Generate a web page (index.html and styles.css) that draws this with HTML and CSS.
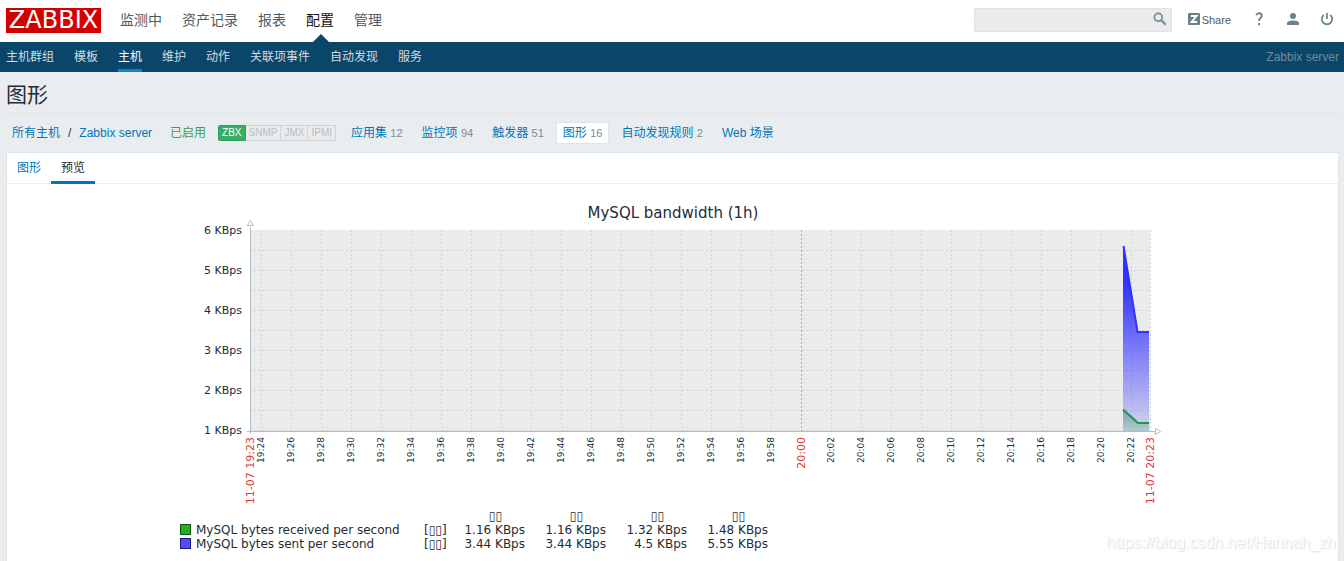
FILE: index.html
```html
<!DOCTYPE html>
<html lang="zh-CN">
<head>
<meta charset="utf-8">
<title>图形</title>
<link rel="stylesheet" href="styles.css">
</head>
<body>
<header class="top">
  <a class="logo" href="#">ZABBIX</a>
  <nav class="main-nav">
    <a href="#">监测中</a>
    <a href="#">资产记录</a>
    <a href="#">报表</a>
    <a href="#" class="selected">配置</a>
    <a href="#">管理</a>
  </nav>
  <form class="search">
    <input type="text" aria-label="搜索">
    <button type="button" aria-label="搜索">
      <svg width="14" height="14" viewBox="0 0 14 14" fill="none" stroke="#768d99"><circle cx="5.3" cy="5.3" r="3.9" stroke-width="1.7"/><path d="M8.2 8.2L12.7 12.7" stroke-width="2.2"/></svg>
    </button>
  </form>
  <div class="user-nav">
    <a class="share" href="#"><svg width="12" height="12" viewBox="0 0 12 12"><rect width="12" height="12" rx="1" fill="#69808d"/><path d="M3 3H8.6L3.6 9H9.2" fill="none" stroke="#fff" stroke-width="1.9"/></svg>Share</a>
    <a class="icon" href="#" aria-label="帮助"><svg width="14" height="14" viewBox="0 0 14 14" fill="none" stroke="#69808d" stroke-width="1.9"><path d="M4.3 3.2C4.800 1.500 6 1.300 7 1.300C8.700 1.300 9.700 2.300 9.700 3.700C9.700 5.900 7 5.900 7 9"/><path d="M7 11V13.200"/></svg></a>
    <a class="icon" href="#" aria-label="用户"><svg width="14" height="14" viewBox="0 0 14 14" fill="#69808d"><circle cx="7" cy="4" r="3"/><path d="M1 13V11C1 9.500 4 8.500 7 8.500S13 9.500 13 11V13Z"/></svg></a>
    <a class="icon" href="#" aria-label="退出"><svg width="14" height="14" viewBox="0 0 14 14" fill="none" stroke="#69808d" stroke-width="1.700"><path d="M7 1V7"/><path d="M3.800 3A5.200 5.200 0 1 0 10.200 3"/></svg></a>
  </div>
</header>
<nav class="sub-nav">
  <a href="#">主机群组</a>
  <a href="#">模板</a>
  <a href="#" class="selected">主机</a>
  <a href="#">维护</a>
  <a href="#">动作</a>
  <a href="#">关联项事件</a>
  <a href="#">自动发现</a>
  <a href="#">服务</a>
  <span class="server">Zabbix server</span>
</nav>
<main>
  <h1>图形</h1>
  <div class="object">
    <div class="crumbs"><a href="#">所有主机</a><span>/</span><a href="#">Zabbix server</a></div>
    <span class="enabled">已启用</span>
    <div class="status"><span class="on">ZBX</span><span>SNMP</span><span>JMX</span><span>IPMI</span></div>
    <div class="links">
      <span><a href="#">应用集</a> <small>12</small></span>
      <span><a href="#">监控项</a> <small>94</small></span>
      <span><a href="#">触发器</a> <small>51</small></span>
      <span class="current"><a href="#">图形</a> <small>16</small></span>
      <span><a href="#">自动发现规则</a> <small>2</small></span>
      <span><a href="#">Web 场景</a></span>
    </div>
  </div>
  <section class="panel">
    <div class="tabs"><a href="#">图形</a><a href="#" class="active">预览</a></div>
    <div class="graph">
      <svg class="plot" viewBox="0 0 1001 319" role="img" aria-label="MySQL bandwidth (1h)">
        <defs>
          <pattern id="vgrid" x="89" y="40" width="30" height="4" patternUnits="userSpaceOnUse"><rect width="1" height="2" fill="#ccd5d9"/></pattern>
          <pattern id="hgrid" x="78" y="60" width="4" height="20" patternUnits="userSpaceOnUse"><rect width="2" height="1" fill="#ccd5d9"/></pattern>
          <linearGradient id="sent" gradientUnits="userSpaceOnUse" x1="0" y1="56" x2="0" y2="241"><stop offset="0" stop-color="#3333ff"/><stop offset=".2" stop-color="#3333ff"/><stop offset="1" stop-color="#3333ff" stop-opacity=".12"/></linearGradient>
          <linearGradient id="received" x1="0" y1="0" x2="0" y2="1"><stop offset="0" stop-color="#6f9ca8" stop-opacity=".8"/><stop offset="1" stop-color="#afc9cc" stop-opacity=".9"/></linearGradient>
        </defs>
        <text class="title" x="501" y="28">MySQL bandwidth (1h)</text>
        <rect x="78" y="40" width="900" height="201" fill="#ebebeb"/>
        <rect x="79" y="40" width="899" height="201" fill="url(#vgrid)"/>
        <rect x="79" y="41" width="899" height="200" fill="url(#hgrid)"/>
        <path d="M629.500 40V241" stroke="#aaa" stroke-dasharray="2 2"/>
        <path d="M978.500 40V241" stroke="#ccd5d9" stroke-dasharray="2 2"/>
        <path d="M951 56H952L966 141H977V241H951Z" fill="url(#sent)"/>
        <path d="M951.500 56L965.500 142H977" fill="none" stroke="#3333ff" stroke-width="2"/>
        <path d="M951 219L966 233H977V241H951Z" fill="url(#received)"/>
        <path d="M951 219.500L966 233H977" fill="none" stroke="#179a43" stroke-width="2"/>
        <g fill="#fff" stroke="#afbec5"><path d="M78.500 37V244M75 241.500H983" fill="none"/><path d="M78.500 30.500L81.500 35.500H75.500Z"/><path d="M983.500 238.500V244.500L988.500 241.500Z"/></g>
        <g class="y-labels"><text x="70" y="44">6 KBps</text><text x="70" y="84">5 KBps</text><text x="70" y="124">4 KBps</text><text x="70" y="164">3 KBps</text><text x="70" y="204">2 KBps</text><text x="70" y="244">1 KBps</text></g>
        <g class="x-labels">
          <text transform="translate(92 247) rotate(-90)">19:24</text>
          <text transform="translate(122 247) rotate(-90)">19:26</text>
          <text transform="translate(152 247) rotate(-90)">19:28</text>
          <text transform="translate(182 247) rotate(-90)">19:30</text>
          <text transform="translate(212 247) rotate(-90)">19:32</text>
          <text transform="translate(242 247) rotate(-90)">19:34</text>
          <text transform="translate(272 247) rotate(-90)">19:36</text>
          <text transform="translate(302 247) rotate(-90)">19:38</text>
          <text transform="translate(332 247) rotate(-90)">19:40</text>
          <text transform="translate(362 247) rotate(-90)">19:42</text>
          <text transform="translate(392 247) rotate(-90)">19:44</text>
          <text transform="translate(422 247) rotate(-90)">19:46</text>
          <text transform="translate(452 247) rotate(-90)">19:48</text>
          <text transform="translate(482 247) rotate(-90)">19:50</text>
          <text transform="translate(512 247) rotate(-90)">19:52</text>
          <text transform="translate(542 247) rotate(-90)">19:54</text>
          <text transform="translate(572 247) rotate(-90)">19:56</text>
          <text transform="translate(602 247) rotate(-90)">19:58</text>
          <text transform="translate(662 247) rotate(-90)">20:02</text>
          <text transform="translate(692 247) rotate(-90)">20:04</text>
          <text transform="translate(722 247) rotate(-90)">20:06</text>
          <text transform="translate(752 247) rotate(-90)">20:08</text>
          <text transform="translate(782 247) rotate(-90)">20:10</text>
          <text transform="translate(812 247) rotate(-90)">20:12</text>
          <text transform="translate(842 247) rotate(-90)">20:14</text>
          <text transform="translate(872 247) rotate(-90)">20:16</text>
          <text transform="translate(902 247) rotate(-90)">20:18</text>
          <text transform="translate(932 247) rotate(-90)">20:20</text>
          <text transform="translate(962 247) rotate(-90)">20:22</text>
          <text class="major" transform="translate(82 247) rotate(-90)">11-07 19:23</text>
          <text class="major" transform="translate(633 247) rotate(-90)">20:00</text>
          <text class="major" transform="translate(982 247) rotate(-90)">11-07 20:23</text>
        </g>
      </svg>
      <table class="legend">
        <thead><tr><th class="name"></th><th class="func"></th><th class="value">▯▯</th><th class="value">▯▯</th><th class="value">▯▯</th><th class="value">▯▯</th></tr></thead>
        <tbody>
          <tr><td class="name"><i class="swatch green"></i>MySQL bytes received per second</td><td class="func">[▯▯]</td><td>1.16 KBps</td><td>1.16 KBps</td><td>1.32 KBps</td><td>1.48 KBps</td></tr>
          <tr><td class="name"><i class="swatch blue"></i>MySQL bytes sent per second</td><td class="func">[▯▯]</td><td>3.44 KBps</td><td>3.44 KBps</td><td>4.5 KBps</td><td>5.55 KBps</td></tr>
        </tbody>
      </table>
    </div>
  </section>
</main>
<div class="watermark">https://blog.csdn.net/Hannah_zh</div>
</body>
</html>
```
FILE: styles.css
```css
* { box-sizing: border-box; }
body {
  margin: 0;
  min-height: 100vh;
  display: flex;
  flex-direction: column;
  position: relative;
  overflow: hidden;
  background: #e9edf0;
  color: #1f2c33;
  font: 12px/16px "Liberation Sans", "Noto Sans CJK SC", sans-serif;
}
a { color: #0275b8; text-decoration: none; }

.top { display: flex; align-items: center; height: 42px; padding: 0 10px 2px 6px; background: #fff; }
.logo {
  width: 95px;
  height: 25px;
  background: #d40000;
  color: #fff;
  font: 24px/25px "DejaVu Sans", sans-serif;
  text-align: center;
}
.main-nav { display: flex; gap: 20px; margin-left: 19px; font-size: 14px; line-height: 40px; }
.main-nav a { color: #4f5b62; }
.main-nav .selected { position: relative; color: #0a1216; }
.main-nav .selected::after {
  content: "";
  position: absolute;
  left: 7px;
  bottom: -2px;
  border: 8px solid transparent;
  border-top: 0;
  border-bottom-color: #0a466a;
}
.search { position: relative; margin-left: auto; }
.search input { display: block; width: 198px; height: 24px; padding: 0 26px 0 6px; border: 1px solid #dfe4e7; background: #ebebeb; }
.search button { position: absolute; right: 5px; top: 4px; display: flex; padding: 0; border: 0; background: none; }
.user-nav { display: flex; align-items: center; gap: 20px; margin-left: 16px; }
.share { display: flex; align-items: center; gap: 2px; margin-right: 1px; color: #4f5b62; font-size: 11px; }
.share svg { margin-bottom: 2px; }
.icon { display: flex; width: 14px; margin-bottom: 2px; }

.sub-nav { display: flex; gap: 20px; height: 30px; padding: 0 5px 0 6px; background: #0a466a; line-height: 30px; }
.sub-nav a { color: #d0dce3; }
.sub-nav .selected { color: #fff; border-bottom: 3px solid #1383c6; }
.server { margin-left: auto; color: #6e8c9c; }

main { flex: 1; display: flex; flex-direction: column; padding: 0 5px 0 6px; }
h1 { margin: 0; height: 42px; border-bottom: 1px solid #dfe4e7; font-size: 21px; font-weight: 400; line-height: 46px; }
.object { display: flex; align-items: center; height: 38px; padding-left: 6px; }
.crumbs { display: flex; gap: 8px; }
.enabled { margin-left: 18px; color: #429e47; }
.status { display: flex; margin: 0 8px 0 12px; font-size: 10px; line-height: 14px; }
.status span { padding: 0 3px; border: 1px solid #ccd5d9; border-left-width: 0; background: #ebebeb; color: #b4bfc5; }
.status .on { border-color: #2f9f5e; background: #34af67; color: #fff; border-left-width: 1px; border-radius: 2px 0 0 2px; }
.links { display: flex; gap: 5px; }
.links > span { padding: 2px 6px; border: 1px solid transparent; border-radius: 2px; }
.links .current { background: #fff; border-color: #dfe4e7; }
.links small { color: #768d99; font-size: 11px; }

.panel { flex: 1; border: 1px solid #dfe4e7; border-bottom: 0; background: #fff; }
.tabs { display: flex; height: 31px; border-bottom: 1px solid #ebeef0; line-height: 30px; }
.tabs a { height: 31px; padding: 0 10px; }
.tabs .active { color: #1f2c33; border-bottom: 3px solid #0275b8; }

.graph { width: 1001px; max-width: 100%; margin: 6px auto 0; font-family: "DejaVu Sans", sans-serif; }
.plot { display: block; width: 100%; font-family: "DejaVu Sans", sans-serif; fill: #1f2c33; }
.title { font-size: 15px; text-anchor: middle; }
.y-labels { font-size: 11px; text-anchor: end; }
.x-labels { font-size: 9px; text-anchor: end; }
.major { font-size: 11px; fill: #e33734; }

.legend { margin-left: 8px; border-collapse: collapse; table-layout: fixed; width: 588px; font-size: 12px; line-height: 14px; }
.legend th, .legend td { height: 14px; padding: 0; text-align: right; font-weight: 400; white-space: nowrap; }
.legend .value { width: 81px; padding-right: 23px; }
.legend .name { width: 244px; text-align: left; }
.legend .func { width: 20px; text-align: left; }
.swatch { display: inline-block; width: 11px; height: 11px; margin-right: 5px; border: 1px solid #145214; vertical-align: -1px; }
.green { background: #22b022; }
.blue { background: #4d4dff; border-color: #1a1a70; }

.watermark { position: absolute; right: 8px; bottom: 8px; color: #fff; font-size: 16px; line-height: 20px; text-shadow: 1px 1px 1px #ddd, 0 0 1px #e4e4e4; }
```
